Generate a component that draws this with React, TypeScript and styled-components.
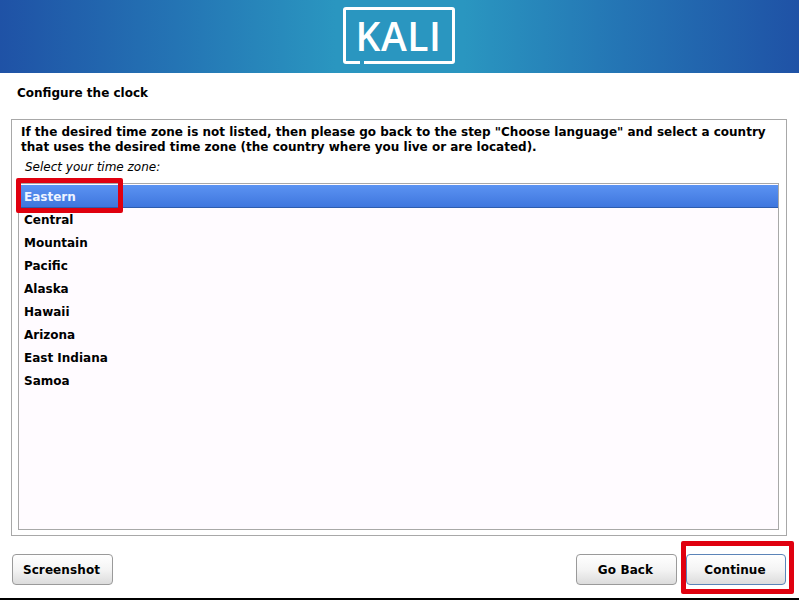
import React from "react";
import styled, { createGlobalStyle } from "styled-components";

const GlobalStyle = createGlobalStyle`
  html, body {
    margin: 0;
    padding: 0;
    background: #ffffff;
  }
`;

const zones = [
  "Eastern",
  "Central",
  "Mountain",
  "Pacific",
  "Alaska",
  "Hawaii",
  "Arizona",
  "East Indiana",
  "Samoa",
];

const Page = styled.div`
  position: relative;
  width: 799px;
  height: 600px;
  overflow: hidden;
  display: flex;
  flex-direction: column;
  background: #ffffff;
  font-family: "DejaVu Sans", sans-serif;
  font-size: 12px;
  color: #000000;
`;

const Banner = styled.header`
  height: 73px;
  flex: none;
  display: flex;
  align-items: flex-start;
  justify-content: center;
  padding-top: 7px;
  box-sizing: border-box;
  background: linear-gradient(90deg, #1f52a6 0%, #2474b4 22%, #2a96c0 42%, #2a96c0 58%, #2474b4 78%, #1f52a6 100%);
`;

const LogoBox = styled.div`
  position: relative;
  width: 112px;
  height: 57px;
  margin-right: 2px;
  box-sizing: border-box;
  border: 3px solid #ffffff;
  border-radius: 3px;
  display: flex;
  align-items: center;
  justify-content: center;
  color: #ffffff;
  font-family: "Open Sans", sans-serif;
  font-size: 39px;
  font-weight: 600;
  line-height: 1;
  letter-spacing: 0.5px;
`;

const LogoNotch = styled.span`
  position: absolute;
  left: 14px;
  bottom: -3px;
  width: 4px;
  height: 3px;
  background: #2a96c0;
`;

const Title = styled.h1`
  margin: 0;
  padding: 13px 0 0 17px;
  height: 46px;
  flex: none;
  box-sizing: border-box;
  font-size: 12px;
  line-height: 15px;
  font-weight: 700;
`;

const Frame = styled.section`
  margin: 0 12px 0 11px;
  height: 417px;
  flex: none;
  box-sizing: border-box;
  border: 1px solid #a8a8a8;
  padding: 5px 7px 5px 6px;
  display: flex;
  flex-direction: column;
`;

const Intro = styled.p`
  margin: 0;
  padding-left: 3px;
  font-size: 12px;
  line-height: 15px;
  font-weight: 700;
`;

const Prompt = styled.div`
  padding: 5px 0 0 7px;
  height: 22px;
  box-sizing: border-box;
  font-size: 12px;
  line-height: 15px;
  font-style: oblique;
`;

const List = styled.ul`
  flex: 1;
  margin: 6px 0 0;
  padding: 1px 0 0;
  list-style: none;
  box-sizing: border-box;
  border: 1px solid #a8a8a8;
  background: #fffbff;
`;

const Row = styled.li<{ $selected?: boolean }>`
  height: 23px;
  box-sizing: border-box;
  padding-left: 5px;
  line-height: 25px;
  font-weight: 700;
  color: ${(p) => (p.$selected ? "#eef4ff" : "#000000")};
  background: ${(p) =>
    p.$selected ? "linear-gradient(180deg, #5b93f2 0%, #3f76de 100%)" : "transparent"};
  border-bottom: ${(p) => (p.$selected ? "1px solid #2d5cae" : "0")};
`;

const Footer = styled.footer`
  flex: 1;
  display: flex;
  align-items: flex-start;
  padding: 18px 13px 0 12px;
`;

const Spacer = styled.div`
  flex: 1;
`;

const Button = styled.button<{ $focused?: boolean; $width: number }>`
  width: ${(p) => p.$width}px;
  height: 31px;
  padding: 0 2px 0 0;
  margin-left: ${(p) => (p.$focused ? "9px" : "0")};
  box-sizing: border-box;
  border: 1px solid ${(p) => (p.$focused ? "#5b84b8" : "#9a9a9a")};
  border-radius: 4px;
  background: linear-gradient(180deg, #ffffff 0%, #f4f4f4 50%, #dcdcdc 100%);
  font-family: "DejaVu Sans", sans-serif;
  font-size: 12px;
  font-weight: 700;
  letter-spacing: 0.1px;
  color: #000000;
`;

const BottomEdge = styled.div`
  position: absolute;
  left: 0;
  right: 0;
  bottom: 0;
  height: 2px;
  background: #000000;
`;

const Highlight = styled.div<{ $x: number; $y: number; $w: number; $h: number }>`
  position: absolute;
  left: ${(p) => p.$x}px;
  top: ${(p) => p.$y}px;
  width: ${(p) => p.$w}px;
  height: ${(p) => p.$h}px;
  box-sizing: border-box;
  border: 5px solid #e0000f;
  border-radius: 2px;
`;

export default function App() {
  return (
    <>
      <GlobalStyle />
      <Page>
        <Banner>
          <LogoBox>
            KALI
            <LogoNotch />
          </LogoBox>
        </Banner>
        <Title>Configure the clock</Title>
        <Frame>
          <Intro>
            If the desired time zone is not listed, then please go back to the step "Choose language" and select a country
            that uses the desired time zone (the country where you live or are located).
          </Intro>
          <Prompt>Select your time zone:</Prompt>
          <List>
            {zones.map((zone, i) => (
              <Row key={zone} $selected={i === 0}>
                {zone}
              </Row>
            ))}
          </List>
        </Frame>
        <Footer>
          <Button $width={101}>Screenshot</Button>
          <Spacer />
          <Button $width={101}>Go Back</Button>
          <Button $width={100} $focused>
            Continue
          </Button>
        </Footer>
        <BottomEdge />
        <Highlight $x={16} $y={178} $w={107} $h={35} />
        <Highlight $x={681} $y={541} $w={113} $h={53} />
      </Page>
    </>
  );
}
